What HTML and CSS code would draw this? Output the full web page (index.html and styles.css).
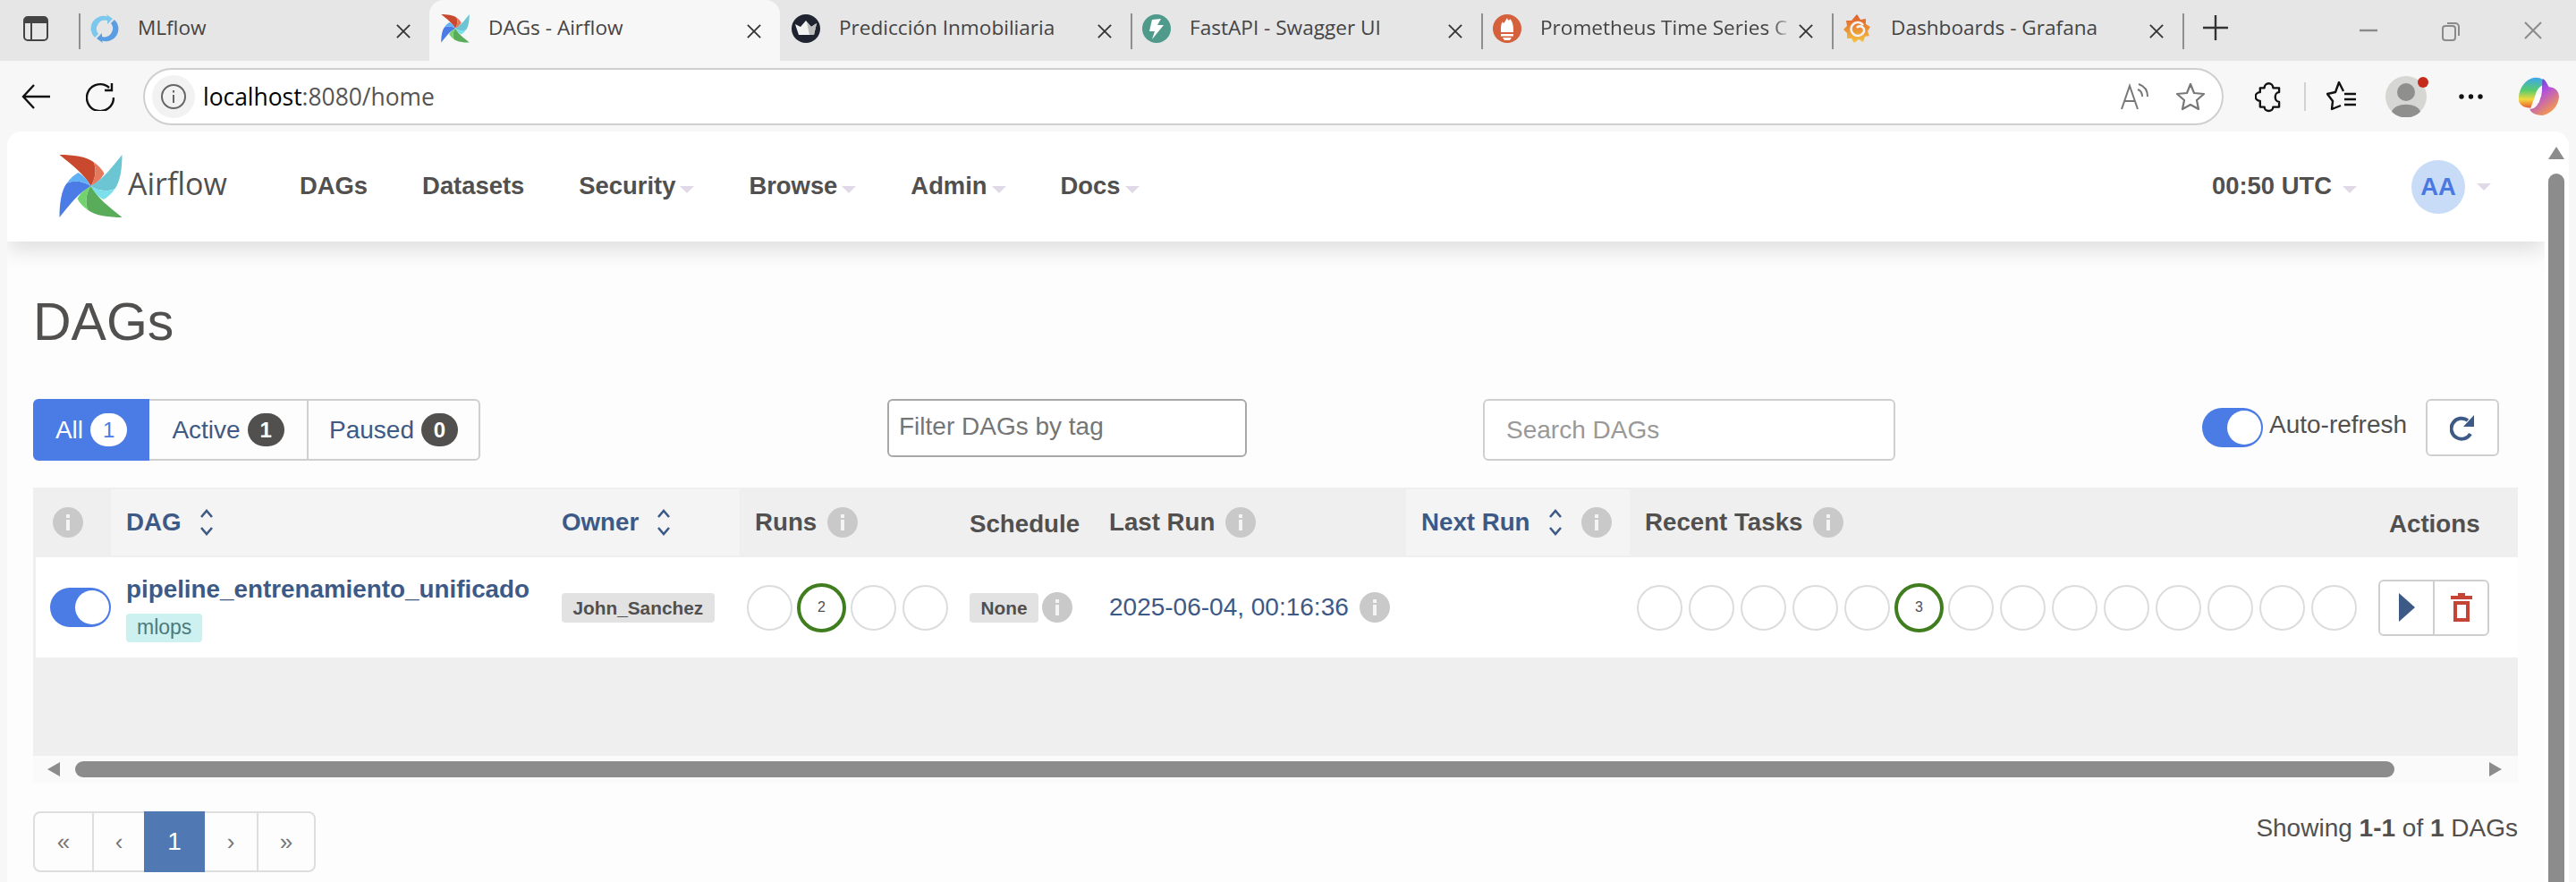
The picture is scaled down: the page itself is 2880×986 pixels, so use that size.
FILE: index.html
```html
<!DOCTYPE html>
<html lang="en">
<head>
  <meta charset="UTF-8">
  <title>DAGs - Airflow</title>
  <link rel="stylesheet" href="styles.css">
</head>
<body>
  <svg class="defs" width="0" height="0">
    <symbol id="pinwheel" viewBox="0 0 70 71">
      <g id="blade-red">
        <path fill="#c9492f" d="M0 0C15 0 30 2 38 8C42 16 40 28 35 35C28 22 15 12 0 0Z"/>
        <path fill="#e5795d" d="M38 8C44 12 48 17 50 21C46 28 41 32 35 35C40 28 42 16 38 8Z"/>
      </g>
      <g transform="rotate(90 35 35)">
        <path fill="#6bc5d2" d="M0 0C15 0 30 2 38 8C42 16 40 28 35 35C28 22 15 12 0 0Z"/>
        <path fill="#7bdfec" d="M38 8C44 12 48 17 50 21C46 28 41 32 35 35C40 28 42 16 38 8Z"/>
      </g>
      <g transform="rotate(180 35 35)">
        <path fill="#58ac5a" d="M0 0C15 0 30 2 38 8C42 16 40 28 35 35C28 22 15 12 0 0Z"/>
        <path fill="#72d26e" d="M38 8C44 12 48 17 50 21C46 28 41 32 35 35C40 28 42 16 38 8Z"/>
      </g>
      <g transform="rotate(270 35 35)">
        <path fill="#4b7be5" d="M0 0C15 0 30 2 38 8C42 16 40 28 35 35C28 22 15 12 0 0Z"/>
        <path fill="#63b1f5" d="M38 8C44 12 48 17 50 21C46 28 41 32 35 35C40 28 42 16 38 8Z"/>
      </g>
    </symbol>
    <symbol id="close-x" viewBox="0 0 18 18">
      <path d="M1 1L17 17M17 1L1 17" fill="none" stroke="currentColor" stroke-width="2"/>
    </symbol>
    <symbol id="sort" viewBox="0 0 16 30">
      <path d="M2 9L8 2L14 9M2 21L8 28L14 21" fill="none" stroke="#3d5a87" stroke-width="2.6"/>
    </symbol>
    <symbol id="info" viewBox="0 0 34 34">
      <circle cx="17" cy="17" r="17" fill="#c9c9c9"/>
      <path d="M15 8h4v4h-4zM15 14h4v12h-4z" fill="#fff" opacity=".8"/>
    </symbol>
  </svg>

  <!-- browser chrome -->
  <div class="tabstrip">
    <div class="strip-btn">
      <svg width="30" height="30" viewBox="0 0 30 30"><rect x="2" y="2" width="26" height="26" rx="4" fill="none" stroke="#444" stroke-width="2"/><path d="M2 6a4 4 0 0 1 4-4h18a4 4 0 0 1 4 4v3H2z" fill="#444"/><path d="M10 9v19" stroke="#444" stroke-width="2"/></svg>
    </div>
    <div class="tab">
      <svg class="favicon" viewBox="0 0 32 32"><path d="M5 26A14 14 0 0 1 19 2.5L18 0L25 5L19 11L19 7A9.500 9.500 0 0 0 9 22Z" fill="#7cc7ec"/><path d="M27 6A14 14 0 0 1 13 29.500L14 32L7 27L13 21L13 25A9.500 9.500 0 0 0 23 10Z" fill="#5b9de3"/></svg>
      <span class="tab-title">MLflow</span>
      <svg class="tab-close"><use href="#close-x"/></svg>
    </div>
    <div class="tab tab-active">
      <svg class="favicon"><use href="#pinwheel"/></svg>
      <span class="tab-title">DAGs - Airflow</span>
      <svg class="tab-close"><use href="#close-x"/></svg>
    </div>
    <div class="tab tab-after-active">
      <svg class="favicon" viewBox="0 0 32 32"><circle cx="16" cy="16" r="16" fill="#1f2430"/><path d="M4 11L10 14L16 7L22 14L28 10L25 23H8Z" fill="#f3f3f3"/><path d="M17 9L22 14L28 10L25 23H20Z" fill="#bdbdbd"/></svg>
      <span class="tab-title">Predicción Inmobiliaria</span>
      <svg class="tab-close"><use href="#close-x"/></svg>
    </div>
    <div class="tab">
      <svg class="favicon" viewBox="0 0 32 32"><circle cx="16" cy="16" r="16" fill="#4f9a8b"/><path d="M21 5L11 6L8 19H14L11 28L24 12H17Z" fill="#fff"/></svg>
      <span class="tab-title">FastAPI - Swagger UI</span>
      <svg class="tab-close"><use href="#close-x"/></svg>
    </div>
    <div class="tab">
      <svg class="favicon" viewBox="0 0 32 32"><circle cx="16" cy="16" r="16" fill="#d4603c"/><path d="M16 4C17 8 19 7 19 5C23 9 23 14 23 20H9C9 14 9 11 11 8C11 10 13 10 13 9C14 7 15 6 16 4Z" fill="#fff"/><path d="M9 22h14v2.500H9zM11 26h10l-2 3h-6z" fill="#fff"/></svg>
      <span class="tab-title tab-title-fade">Prometheus Time Series C</span>
      <svg class="tab-close"><use href="#close-x"/></svg>
    </div>
    <div class="tab">
      <svg class="favicon" viewBox="0 0 32 32"><defs><linearGradient id="graf" x1="0" y1="0" x2="0" y2="1"><stop offset="0" stop-color="#e0592a"/><stop offset="1" stop-color="#f5c542"/></linearGradient></defs><path d="M15 0L19 6L25 5L25 11L30 14L27 19L29 24L24 25L22 31L17 28L12 32L9 27L4 27L4 21L0 17L4 13L3 7L9 7Z" fill="url(#graf)"/><path d="M22 12A7.500 7.500 0 1 0 22 21A4 4 0 1 0 15 15" fill="none" stroke="#f2f2f2" stroke-width="2.600"/></svg>
      <span class="tab-title">Dashboards - Grafana</span>
      <svg class="tab-close"><use href="#close-x"/></svg>
    </div>
    <div class="new-tab">
      <svg width="30" height="30" viewBox="0 0 30 30"><path d="M15 1V29M1 15H29" stroke="#333" stroke-width="2.400" fill="none"/></svg>
    </div>
    <div class="window-btns">
      <svg width="20" height="20" viewBox="0 0 20 20"><path d="M0 10H20" stroke="#8a8a8a" stroke-width="2.400"/></svg>
      <svg width="20" height="22" viewBox="0 0 20 22"><rect x="1" y="5" width="14" height="16" rx="3" fill="none" stroke="#8a8a8a" stroke-width="2"/><path d="M6 2H15A4 4 0 0 1 19 6V16" fill="none" stroke="#8a8a8a" stroke-width="2"/></svg>
      <svg width="20" height="20" viewBox="0 0 20 20"><path d="M1 1L19 19M19 1L1 19" stroke="#8a8a8a" stroke-width="2"/></svg>
    </div>
  </div>

  <div class="toolbar">
    <svg class="tool-back" width="32" height="30" viewBox="0 0 32 30"><path d="M14 2L2 15L14 28M2 15H32" fill="none" stroke="#111" stroke-width="2.400"/></svg>
    <svg class="tool-reload" width="32" height="32" viewBox="0 0 32 32"><path d="M26 6A15 15 0 1 0 31 17" fill="none" stroke="#111" stroke-width="2.400"/><path d="M29 1V9H21" fill="none" stroke="#111" stroke-width="2.400"/></svg>
    <div class="addressbar">
      <div class="site-info">
        <svg width="28" height="28" viewBox="0 0 28 28"><circle cx="14" cy="14" r="13" fill="none" stroke="#666" stroke-width="2"/><path d="M14 12V21M14 7V9.500" stroke="#666" stroke-width="2"/></svg>
      </div>
      <span class="url"><span class="url-host">localhost</span>:8080/home</span>
      <svg class="addr-read" width="32" height="30" viewBox="0 0 32 30"><path d="M1 29L10 3L19 29M4.500 20H15.500" fill="none" stroke="#777" stroke-width="2"/><path d="M19 7C22 8 24 11 24 15M20 1C26 3 30 8 30 15" fill="none" stroke="#777" stroke-width="2"/></svg>
      <svg class="addr-star" width="32" height="32" viewBox="0 0 32 32"><path d="M16 2L20 12L31 13L23 20L25 30L16 25L7 30L9 20L1 13L12 12Z" fill="none" stroke="#777" stroke-width="2.200" stroke-linejoin="round"/></svg>
    </div>
    <svg class="tool-ext" width="30" height="36" viewBox="-1 0 31 36"><path d="M6 8H10C10 1 20 1 20 8H27V13C21 13 21 24 27 24V30H20C20 36 10 36 10 30H5V23C-2 23 -2 13 5 13V8Z" fill="none" stroke="#111" stroke-width="2.400" stroke-linejoin="round"/></svg>
    <span class="tool-sep"></span>
    <svg class="tool-fav" width="34" height="33" viewBox="0 0 34 33"><path d="M19 11L14 1L10 12L1 14L7 22L6 31L16 27" fill="none" stroke="#111" stroke-width="2.400" stroke-linejoin="round"/><path d="M20 14H33M20 20H33M20 26H33" stroke="#111" stroke-width="2.400"/></svg>
    <div class="profile">
      <svg width="46" height="46" viewBox="0 0 46 46"><circle cx="23" cy="23" r="23" fill="#d6d6d3"/><circle cx="23" cy="18" r="10" fill="#8f8f8d"/><path d="M7 40C10 29 36 29 39 40A23 23 0 0 1 7 40Z" fill="#8f8f8d"/></svg>
      <span class="profile-dot"></span>
    </div>
    <svg class="tool-more" width="27" height="6" viewBox="0 0 27 6"><circle cx="3" cy="3" r="2.700" fill="#111"/><circle cx="13.500" cy="3" r="2.700" fill="#111"/><circle cx="24" cy="3" r="2.700" fill="#111"/></svg>
    <svg class="tool-copilot" width="46" height="43" viewBox="0 0 45 42"><defs><linearGradient id="cop-a" x1="0" y1="0" x2="0" y2="1"><stop offset="0" stop-color="#3ea6f0"/><stop offset=".42" stop-color="#58cc6c"/><stop offset=".72" stop-color="#f4d83e"/><stop offset="1" stop-color="#e8552f"/></linearGradient><linearGradient id="cop-b" x1="0" y1="0" x2=".6" y2="1"><stop offset="0" stop-color="#2448d0"/><stop offset=".45" stop-color="#b04fe0"/><stop offset="1" stop-color="#f59a4a"/></linearGradient></defs><path d="M14 2C18 0 24 0 27 3L29 8C24 10 21 13 19 20L14 34C9 34 2 32 1 26C0 16 6 5 14 2Z" fill="url(#cop-a)"/><path d="M27 2C31 4 32 8 34 11C40 11 45 15 45 22C44 32 37 40 27 42C21 42 14 40 13 35C18 35 21 32 23 27L26 18C27 14 26 8 27 2Z" fill="url(#cop-b)"/><path d="M20 19H26L23 28H17Z" fill="#fff"/></svg>
  </div>

  <!-- airflow page -->
  <div class="page">
    <div class="page-main">
      <nav class="navbar">
        <div class="brand">
          <svg class="brand-logo"><use href="#pinwheel"/></svg>
          <span class="brand-name">Airflow</span>
        </div>
        <ul class="nav-links">
          <li>DAGs</li>
          <li>Datasets</li>
          <li>Security<span class="caret"></span></li>
          <li>Browse<span class="caret"></span></li>
          <li>Admin<span class="caret"></span></li>
          <li>Docs<span class="caret"></span></li>
        </ul>
        <div class="nav-right">
          <span class="clock">00:50 UTC<span class="caret caret-wide"></span></span>
          <span class="avatar">AA</span>
          <span class="caret caret-avatar"></span>
        </div>
      </nav>

      <main class="content">
        <h2 class="page-title">DAGs</h2>

        <div class="filters">
          <div class="btn-group">
            <a class="status-btn status-all">All <span class="count count-light">1</span></a>
            <a class="status-btn status-active">Active <span class="count">1</span></a>
            <a class="status-btn status-paused">Paused <span class="count">0</span></a>
          </div>
          <div class="tag-filter">Filter DAGs by tag</div>
          <div class="dag-search">Search DAGs</div>
          <div class="auto-refresh">
            <span class="toggle toggle-ring"><span class="knob"></span></span>
            <span class="auto-label">Auto-refresh</span>
          </div>
          <button class="refresh-btn">
            <svg width="28" height="30" viewBox="0 0 28 30"><path d="M23 22A11.500 11.500 0 1 1 20 7" fill="none" stroke="#3d5a87" stroke-width="4"/><path d="M27 1V14H15Z" fill="#3d5a87"/></svg>
          </button>
        </div>

        <div class="table-wrap">
          <table class="dag-table">
            <colgroup>
              <col class="col-toggle"><col class="col-dag"><col class="col-owner"><col class="col-runs"><col class="col-schedule"><col class="col-last"><col class="col-next"><col class="col-tasks"><col class="col-actions">
            </colgroup>
            <thead>
              <tr>
                <th><svg class="info-icon info-first"><use href="#info"/></svg></th>
                <th class="sortable"><span class="th-inner">DAG <svg class="sort-icon"><use href="#sort"/></svg></span></th>
                <th class="sortable"><span class="th-inner">Owner <svg class="sort-icon"><use href="#sort"/></svg></span></th>
                <th class="plain"><span class="th-inner">Runs <svg class="info-icon"><use href="#info"/></svg></span></th>
                <th class="plain low">Schedule</th>
                <th class="plain"><span class="th-inner">Last Run <svg class="info-icon"><use href="#info"/></svg></span></th>
                <th class="sortable"><span class="th-inner">Next Run <svg class="sort-icon"><use href="#sort"/></svg><svg class="info-icon info-next"><use href="#info"/></svg></span></th>
                <th class="plain"><span class="th-inner">Recent Tasks <svg class="info-icon"><use href="#info"/></svg></span></th>
                <th class="plain low th-actions">Actions</th>
              </tr>
            </thead>
            <tbody>
              <tr>
                <td class="td-toggle"><span class="toggle"><span class="knob"></span></span></td>
                <td class="td-dag">
                  <a class="dag-link">pipeline_entrenamiento_unificado</a>
                  <span class="tag">mlops</span>
                </td>
                <td><span class="badge">John_Sanchez</span></td>
                <td class="td-dots">
                  <div class="dots">
                    <span class="dot"></span><span class="dot dot-success">2</span><span class="dot"></span><span class="dot"></span>
                  </div>
                </td>
                <td><span class="cell-row"><span class="badge">None</span><svg class="info-icon"><use href="#info"/></svg></span></td>
                <td><span class="cell-row cell-date"><span class="date">2025-06-04, 00:16:36</span><svg class="info-icon"><use href="#info"/></svg></span></td>
                <td></td>
                <td class="td-dots">
                  <div class="dots">
                    <span class="dot"></span><span class="dot"></span><span class="dot"></span><span class="dot"></span><span class="dot"></span><span class="dot dot-success">3</span><span class="dot"></span><span class="dot"></span><span class="dot"></span><span class="dot"></span><span class="dot"></span><span class="dot"></span><span class="dot"></span><span class="dot"></span>
                  </div>
                </td>
                <td class="td-actions">
                  <div class="action-group">
                    <button class="action-btn">
                      <svg width="18" height="32" viewBox="0 0 18 32"><path d="M0 0L18 16L0 32Z" fill="#3d5a87"/></svg>
                    </button>
                    <button class="action-btn">
                      <svg width="24" height="32" viewBox="0 0 24 32"><path d="M8 0H16V3H24V7H0V3H8Z" fill="#c44536"/><path d="M3 9H21V32H3ZM7 13V28H17V13Z" fill="#c44536" fill-rule="evenodd"/></svg>
                    </button>
                  </div>
                </td>
              </tr>
            </tbody>
          </table>
        </div>
        <div class="hscroll">
          <span class="arrow-left"></span>
          <span class="hthumb"></span>
          <span class="arrow-right"></span>
        </div>

        <div class="table-foot">
          <ul class="pagination">
            <li>«</li>
            <li>‹</li>
            <li class="current">1</li>
            <li>›</li>
            <li>»</li>
          </ul>
          <p class="showing">Showing <b>1-1</b> of <b>1</b> DAGs</p>
        </div>
      </main>
    </div>
    <div class="vscroll">
      <span class="arrow-up"></span>
      <span class="vthumb"></span>
    </div>
  </div>
</body>
</html>
```

FILE: styles.css
```css
/* General */
* {
  box-sizing: border-box;
}

html, body {
  height: 986px;
  overflow: hidden;
}

body {
  margin: 0;
  background: #f7f7f7;
  font-family: "Liberation Sans", Arial, sans-serif;
  font-size: 28px;
  color: #51504f;
}

.defs {
  display: block;
  height: 0;
}

/* Tab strip */
.tabstrip {
  display: flex;
  height: 68px;
  background: #e6e6e6;
  font-family: "Open Sans", sans-serif;
  font-size: 22.6px;
  color: #444;
}

.strip-btn {
  width: 88px;
  padding: 17px 0 0 25px;
}

.tab {
  display: flex;
  align-items: center;
  width: 392px;
  padding: 0 21px 4px 13px;
  position: relative;
}

.tab::before {
  content: "";
  position: absolute;
  left: 0;
  top: 15px;
  width: 2px;
  height: 40px;
  background: #8f8f8f;
}

.tab-active {
  background: #f7f7f7;
  border-radius: 16px 16px 0 0;
}

.tab-active::before,
.tab-after-active::before {
  display: none;
}

.favicon {
  width: 32px;
  height: 32px;
  flex: none;
}

.tab-title {
  margin: -3px 0 0 21px;
  white-space: nowrap;
  flex: 1;
}

.tab-title-fade {
  -webkit-mask-image: linear-gradient(90deg, #000 92%, transparent 99%);
  mask-image: linear-gradient(90deg, #000 92%, transparent 99%);
  flex: none;
  width: 283px;
}

.tab-close {
  width: 16px;
  height: 18px;
  margin: 5px 0 0 auto;
  flex: none;
  color: #333;
}

.new-tab {
  width: 82px;
  height: 40px;
  margin-top: 15px;
  padding: 1px 0 0 20px;
  border-left: 2px solid #8f8f8f;
}

.window-btns {
  display: flex;
  gap: 72px;
  padding-top: 24px;
  margin-left: 116px;
}

/* Toolbar */
.toolbar {
  display: flex;
  align-items: center;
  height: 79px;
  padding-left: 24px;
}

.tool-reload {
  margin-left: 40px;
}

.addressbar {
  display: flex;
  align-items: center;
  width: 2326px;
  height: 64px;
  margin-left: 32px;
  padding-left: 8px;
  background: #fff;
  border: 2px solid #cfcfcf;
  border-radius: 32px;
}

.site-info {
  display: flex;
  align-items: center;
  justify-content: center;
  width: 48px;
  height: 48px;
  background: #f2f2f2;
  border-radius: 50%;
}

.url {
  margin-left: 9px;
  font-family: "Open Sans", sans-serif;
  font-size: 26.4px;
  color: #555;
  flex: 1;
}

.url-host {
  color: #000;
}

.addr-star {
  margin: 0 19px 0 30px;
}

.tool-ext {
  margin-left: 35px;
}

.tool-sep {
  width: 2px;
  height: 32px;
  margin-left: 25px;
  background: #d2d2d2;
}

.tool-fav {
  margin-left: 23px;
}

.profile {
  position: relative;
  height: 46px;
  margin-left: 32px;
}

.profile-dot {
  position: absolute;
  right: -2px;
  top: 1px;
  width: 12px;
  height: 12px;
  border-radius: 50%;
  background: #c42b1c;
}

.tool-more {
  margin-left: 36px;
}

.tool-copilot {
  margin-left: 39px;
}

/* Page */
.page {
  display: flex;
  height: 839px;
  margin: 0 8px;
  background: #fdfdfd;
  border-radius: 16px 16px 0 0;
  overflow: hidden;
}

.page-main {
  width: 2837px;
}

/* Navbar */
.navbar {
  display: flex;
  align-items: center;
  height: 123px;
  background: #fff;
  box-shadow: 0 10px 22px rgba(0, 0, 0, 0.12);
  font-size: 27.4px;
  font-weight: bold;
}

.brand {
  display: flex;
  align-items: center;
  width: 327px;
  padding-left: 58px;
  font-weight: normal;
}

.brand-logo {
  width: 71px;
  height: 71px;
  flex: none;
}

.brand-name {
  margin: -8px 0 0 6px;
  font-family: "Open Sans", sans-serif;
  font-size: 34px;
  color: #51504f;
}

.nav-links {
  display: flex;
  gap: 61px;
  margin: 0 0 2px;
  padding: 0;
  list-style: none;
}

.caret {
  display: inline-block;
  width: 0;
  height: 0;
  margin-left: 5px;
  vertical-align: 1px;
  border-left: 8px solid transparent;
  border-right: 8px solid transparent;
  border-top: 8px solid #e2d9e8;
}

.nav-right {
  display: flex;
  align-items: center;
  margin-left: auto;
  padding-right: 60px;
}

.clock {
  margin-bottom: 2px;
}

.caret-wide {
  margin-left: 12px;
}

.avatar {
  display: flex;
  align-items: center;
  justify-content: center;
  width: 60px;
  height: 60px;
  margin-left: 61px;
  border-radius: 50%;
  background: #c8dcf8;
  color: #4a78e2;
}

.caret-avatar {
  margin-left: 13px;
}

/* Content */
.content {
  padding: 0 30px 0 29px;
}

.page-title {
  height: 66px;
  margin: 57px 0 0;
  font-size: 59px;
  font-weight: normal;
  line-height: 66px;
}

.filters {
  display: flex;
  align-items: flex-start;
  height: 69px;
  margin-top: 53px;
}

.btn-group {
  display: flex;
  height: 69px;
}

.status-btn {
  display: flex;
  align-items: center;
  justify-content: center;
  gap: 8px;
  border: 2px solid #cfcfcf;
  color: #3d5a87;
}

.status-all {
  width: 130px;
  background: #4b7be5;
  border-color: #4b7be5;
  border-radius: 6px 0 0 6px;
  color: #fff;
}

.status-active {
  width: 176px;
  border-left: 0;
  border-right: 0;
}

.status-paused {
  width: 194px;
  border-radius: 0 6px 6px 0;
}

.count {
  display: flex;
  align-items: center;
  justify-content: center;
  width: 41px;
  height: 37px;
  border-radius: 19px;
  background: #51504f;
  color: #fff;
  font-size: 24px;
  font-weight: bold;
}

.count-light {
  background: #fff;
  color: #4b7be5;
  font-weight: normal;
}

.tag-filter {
  width: 402px;
  height: 65px;
  margin-left: 455px;
  padding: 0 11px;
  border: 2px solid #a8a8a8;
  border-radius: 6px;
  background: #fff;
  color: #757575;
  line-height: 58px;
}

.dag-search {
  width: 461px;
  height: 69px;
  margin-left: 264px;
  padding: 0 24px;
  border: 2px solid #cfcfcf;
  border-radius: 6px;
  background: #fff;
  color: #999;
  line-height: 65px;
}

.auto-refresh {
  display: flex;
  align-items: center;
  width: 250px;
  margin: 10px 0 0 343px;
}

.auto-label {
  margin: -6px 0 0 7px;
  white-space: nowrap;
}

.toggle {
  display: flex;
  justify-content: flex-end;
  align-items: center;
  width: 68px;
  height: 44px;
  padding: 0 2px;
  border-radius: 22px;
  background: #4b7be5;
}

.toggle-ring {
  flex: none;
}

.knob {
  width: 38px;
  height: 38px;
  border-radius: 50%;
  background: #fff;
}

.refresh-btn {
  display: flex;
  align-items: center;
  justify-content: center;
  width: 82px;
  height: 64px;
  padding: 0;
  border: 2px solid #cfcfcf;
  border-radius: 6px;
  background: #fff;
}

/* Table */
.table-wrap {
  height: 300px;
  margin-top: 30px;
  background: #efefef;
  border-radius: 6px 6px 0 0;
}

.dag-table {
  width: 2778px;
  border-collapse: separate;
  border-spacing: 0;
  table-layout: fixed;
}

.col-toggle { width: 87px; }
.col-dag { width: 487px; }
.col-owner { width: 216px; }
.col-runs { width: 240px; }
.col-schedule { width: 156px; }
.col-last { width: 349px; }
.col-next { width: 250px; }
.col-tasks { width: 832px; }
.col-actions { width: 161px; }

.dag-table th {
  height: 78px;
  padding: 0 17px;
  font-size: 27.7px;
  text-align: left;
  background: #efefef;
  border-top: 2px solid #efefef;
  border-bottom: 2px solid #efefef;
}

.dag-table th.sortable {
  background: #f4f4f4;
  color: #3d5a87;
}

.dag-table th.low {
  padding-top: 3px;
}

.dag-table th.th-actions {
  padding-right: 43px;
  text-align: right;
}

.th-inner {
  display: flex;
  align-items: center;
  white-space: nowrap;
}

.sort-icon {
  width: 16px;
  height: 30px;
  margin-left: 20px;
  flex: none;
}

.info-icon {
  width: 34px;
  height: 34px;
  margin-left: 12px;
  flex: none;
}

.info-first {
  display: block;
  margin-left: 5px;
}

.info-next {
  margin-left: 21px;
}

.dag-table td {
  height: 112px;
  padding: 0 17px;
  background: #fff;
  vertical-align: middle;
}

.dag-table td.td-toggle {
  padding: 0 0 0 16px;
  border-left: 3px solid #efefef;
}

.dag-table td.td-dag {
  padding-top: 1px;
}

.dag-link {
  display: block;
  margin-bottom: 8px;
  color: #3d5a87;
  font-size: 27.8px;
  font-weight: bold;
  white-space: nowrap;
  line-height: 34px;
}

.tag {
  display: inline-block;
  height: 32px;
  padding: 0 12px;
  border-radius: 4px;
  background: #cdf0f0;
  color: #4d7b7b;
  font-size: 23px;
  line-height: 31px;
}

.badge {
  display: inline-block;
  height: 33px;
  padding: 0 12.500px;
  border-radius: 4px;
  background: #e2e2e2;
  font-size: 20.800px;
  font-weight: bold;
  line-height: 33px;
  white-space: nowrap;
}

.cell-row {
  display: flex;
  align-items: center;
}

.cell-row .info-icon {
  margin-left: 4px;
}

.cell-date .info-icon {
  margin-left: 12px;
}

.date {
  color: #3d5a87;
  white-space: nowrap;
}

.dag-table td.td-dots {
  padding: 0 0 0 8px;
}

.dots {
  display: flex;
  gap: 7px;
}

.dot {
  width: 51px;
  height: 51px;
  border: 2px solid #dcdcdc;
  border-radius: 50%;
  flex: none;
}

.dot-success {
  display: flex;
  align-items: center;
  justify-content: center;
  width: 55px;
  height: 55px;
  margin: -2px;
  border: 4px solid #3f7d1e;
  font-size: 16px;
}

.dag-table td.td-actions {
  padding: 0 0 0 5px;
}

.action-group {
  display: flex;
  width: 124px;
  height: 63px;
  border: 2px solid #cfcfcf;
  border-radius: 6px;
}

.action-btn {
  display: flex;
  align-items: center;
  justify-content: center;
  flex: 1;
  padding: 0;
  border: 0;
  background: none;
}

.action-btn + .action-btn {
  border-left: 2px solid #cfcfcf;
}

/* Horizontal scrollbar */
.hscroll {
  display: flex;
  align-items: flex-start;
  height: 30px;
  padding: 6px 0 0 16px;
  background: #fafafa;
}

.arrow-left {
  width: 0;
  height: 0;
  margin-top: 1px;
  border-top: 8px solid transparent;
  border-bottom: 8px solid transparent;
  border-right: 14px solid #8c8c8c;
}

.hthumb {
  width: 2593px;
  height: 18px;
  margin-left: 17px;
  border-radius: 9px;
  background: #8c8c8c;
}

.arrow-right {
  width: 0;
  height: 0;
  margin: 1px 0 0 106px;
  border-top: 8px solid transparent;
  border-bottom: 8px solid transparent;
  border-left: 14px solid #8c8c8c;
}

/* Footer */
.table-foot {
  display: flex;
  justify-content: space-between;
  margin-top: 32px;
}

.pagination {
  display: flex;
  height: 68px;
  margin: 0;
  padding: 0;
  list-style: none;
  border: 2px solid #dedede;
  border-radius: 8px;
  color: #777;
  font-size: 26px;
}

.pagination li {
  display: flex;
  align-items: center;
  justify-content: center;
  width: 58px;
  border-left: 2px solid #dedede;
}

.pagination li:first-child {
  width: 64px;
  border-left: 0;
}

.pagination li:last-child {
  width: 64px;
}

.pagination li.current {
  width: 68px;
  margin: -2px 0;
  border: 0;
  background: #5079b3;
  color: #fff;
  font-size: 28px;
}

.pagination li.current + li {
  border-left: 0;
}

.showing {
  margin: 3px 0 0;
  line-height: 32px;
}

.showing b {
  font-weight: bold;
}

/* Vertical scrollbar */
.vscroll {
  display: flex;
  flex-direction: column;
  width: 27px;
  padding: 17px 0 0 4px;
  background: #fff;
}

.arrow-up {
  width: 0;
  height: 0;
  border-left: 9px solid transparent;
  border-right: 9px solid transparent;
  border-bottom: 14px solid #8c8c8c;
}

.vthumb {
  width: 18px;
  flex: 1;
  margin-top: 16px;
  border-radius: 9px 9px 0 0;
  background: #8c8c8c;
}
```
